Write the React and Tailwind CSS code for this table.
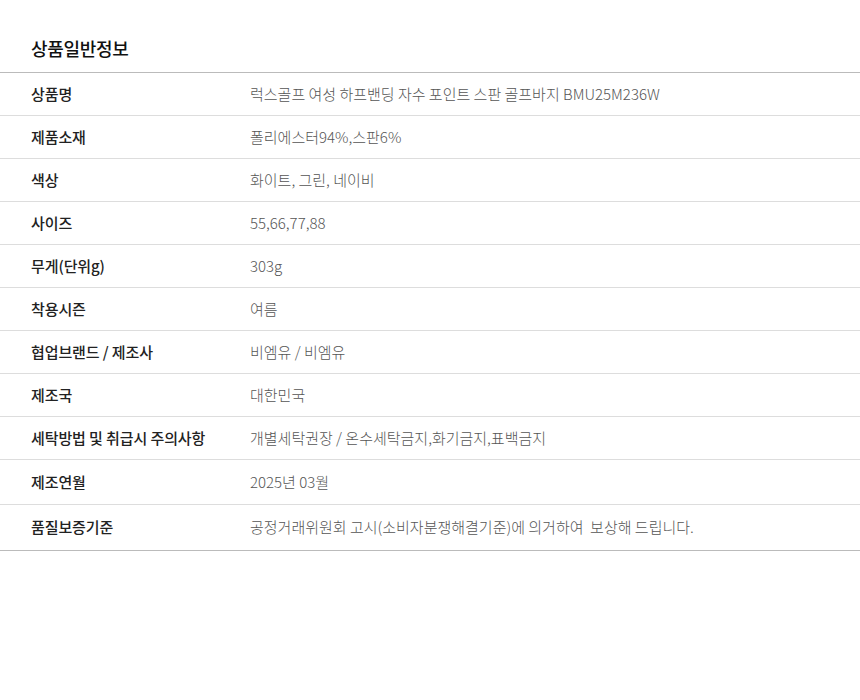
const rows = [
  ["상품명", "럭스골프 여성 하프밴딩 자수 포인트 스판 골프바지 BMU25M236W"],
  ["제품소재", "폴리에스터94%,스판6%"],
  ["색상", "화이트, 그린, 네이비"],
  ["사이즈", "55,66,77,88"],
  ["무게(단위g)", "303g"],
  ["착용시즌", "여름"],
  ["협업브랜드 / 제조사", "비엠유 / 비엠유"],
  ["제조국", "대한민국"],
  ["세탁방법 및 취급시 주의사항", "개별세탁권장 / 온수세탁금지,화기금지,표백금지"],
  ["제조연월", "2025년 03월"],
  ["품질보증기준", "공정거래위원회 고시(소비자분쟁해결기준)에 의거하여  보상해 드립니다."],
];

export default function App() {
  return (
    <div className="min-h-[700px] w-[860px] bg-white font-['Noto_Sans_CJK_KR',sans-serif] pt-[35px]">
      <h2 className="pl-[31px] text-[18px] font-medium leading-[26px] text-[#111] tracking-[-0.3px]">
        상품일반정보
      </h2>
      <div className="mt-[11px] border-t border-b border-[#bbbbbb]">
        {rows.map(([label, value], i) => (
          <div
            key={label}
            className={`flex items-center ${i >= 9 ? "h-[45px]" : "h-[43px]"} ${
              i < rows.length - 1 ? "border-b border-[#dddddd]" : ""
            }`}
          >
            <div className="w-[250px] shrink-0 pl-[31px] text-[15px] font-medium tracking-[-0.1px] text-[#222]">{label}</div>
            <div className="text-[15px] font-light text-[#555] whitespace-pre">{value}</div>
          </div>
        ))}
      </div>
    </div>
  );
}
